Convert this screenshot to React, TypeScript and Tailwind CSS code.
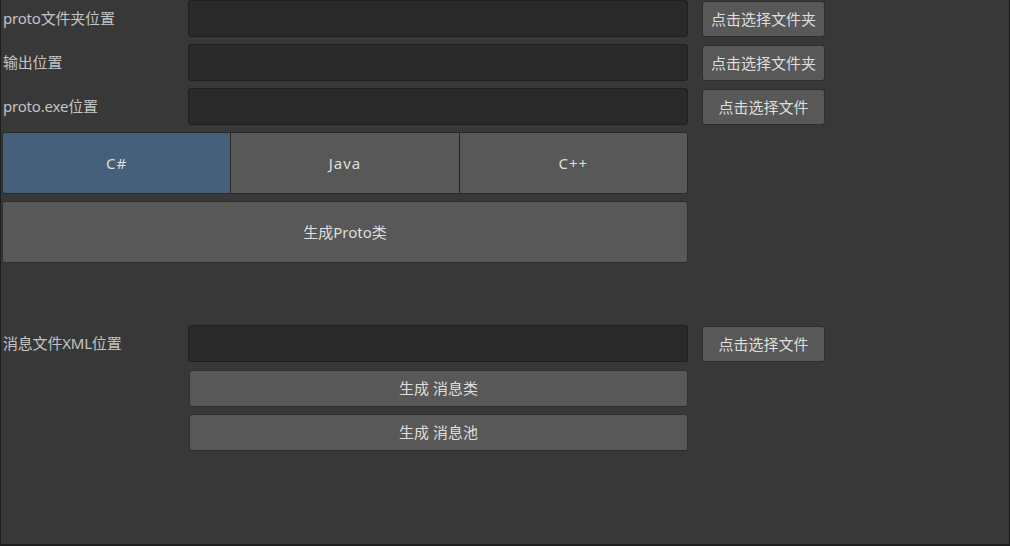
const font = { fontFamily: '"Noto Sans", "Noto Sans CJK SC", sans-serif' };

function PathRow({ label, action, className = "" }: { label: string; action: string; className?: string }) {
  return (
    <div className={`flex h-[37px] items-center ${className}`}>
      <div className="w-[187px] shrink-0 pl-[2px] text-[15px] tracking-[-0.2px] text-[#c4c4c4]">{label}</div>
      <div className="h-full w-[500px] shrink-0 rounded-[3px] border border-[#1f1f1f] bg-[#2a2a2a]" />
      <button className="ml-[14px] flex h-[36px] w-[123px] items-center justify-center self-end rounded-[3px] border border-[#2e2e2e] bg-[#585858] text-[15px] text-[#dedede]">
        {action}
      </button>
    </div>
  );
}

function WideButton({ label, className = "" }: { label: string; className?: string }) {
  return (
    <button className={`flex items-center justify-center rounded-[3px] border border-[#2e2e2e] bg-[#585858] text-[15px] text-[#dedede] ${className}`}>
      {label}
    </button>
  );
}

export default function App() {
  const langs = ["C#", "Java", "C++"];
  const selected = 0;
  return (
    <div style={font} className="flex h-[546px] w-[1010px] flex-col border-b-[2px] border-l border-r border-[#1e1e1e] bg-[#383838]">
      <PathRow label="proto文件夹位置" action="点击选择文件夹" />
      <PathRow label="输出位置" action="点击选择文件夹" className="mt-[7px]" />
      <PathRow label="proto.exe位置" action="点击选择文件" className="mt-[7px]" />

      <div className="ml-px mt-[7px] flex h-[62px] w-[686px] overflow-hidden rounded-[3px] border border-[#2a2a2a]">
        {langs.map((l, i) => (
          <div
            key={l}
            className={`flex flex-1 items-center justify-center text-[15px] tracking-[1px] text-[#dedede] ${i > 0 ? "border-l border-[#262626]" : ""} ${i === selected ? "bg-[#46607c]" : "bg-[#585858]"}`}
          >
            {l}
          </div>
        ))}
      </div>

      <WideButton label="生成Proto类" className="ml-px mt-[7px] h-[62px] w-[686px]" />

      <div className="mt-[62px] flex h-[37px] items-center">
        <div className="w-[187px] shrink-0 pl-[2px] text-[15px] tracking-[-0.2px] text-[#c4c4c4]">消息文件XML位置</div>
        <div className="h-full w-[500px] shrink-0 rounded-[3px] border border-[#1f1f1f] bg-[#2a2a2a]" />
        <button className="ml-[14px] flex h-[36px] w-[123px] items-center justify-center self-end rounded-[3px] border border-[#2e2e2e] bg-[#585858] text-[15px] text-[#dedede]">
          点击选择文件
        </button>
      </div>

      <WideButton label="生成 消息类" className="ml-[188px] mt-[8px] h-[37px] w-[499px]" />
      <WideButton label="生成 消息池" className="ml-[188px] mt-[7px] h-[37px] w-[499px]" />
    </div>
  );
}
